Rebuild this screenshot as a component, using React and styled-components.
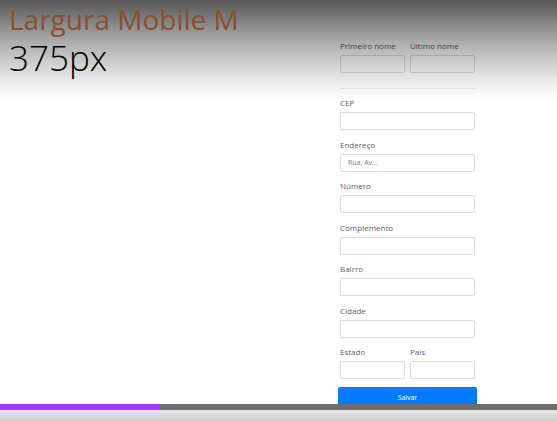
import styled, { createGlobalStyle } from "styled-components";

const GlobalStyle = createGlobalStyle`
  html, body { margin: 0; padding: 0; background: #fff; }
  body { font-family: "Open Sans", "Liberation Sans", sans-serif; }
  * { box-sizing: border-box; }
`;

const firstRow = [
  { label: "Primeiro nome" },
  { label: "Último nome" },
];

const fields = [
  { label: "CEP" },
  { label: "Endereço", placeholder: "Rua, Av..." },
  { label: "Número" },
  { label: "Complemento" },
  { label: "Bairro" },
  { label: "Cidade" },
];

const lastRow = [{ label: "Estado" }, { label: "País" }];

export default function App() {
  return (
    <>
      <GlobalStyle />
      <Stage>
        <Slide>
          <Heading>
            <Title>Largura Mobile M</Title>
            <Size>375px</Size>
          </Heading>

          <Form onSubmit={(e) => e.preventDefault()}>
            <Row>
              {firstRow.map((f) => (
                <Group key={f.label}>
                  <Label>{f.label}</Label>
                  <Input />
                </Group>
              ))}
            </Row>
            <Divider />
            {fields.map((f) => (
              <Group key={f.label}>
                <Label>{f.label}</Label>
                <Input placeholder={f.placeholder} />
              </Group>
            ))}
            <Row>
              {lastRow.map((f) => (
                <Group key={f.label}>
                  <Label>{f.label}</Label>
                  <Input />
                </Group>
              ))}
            </Row>
            <Button type="submit">Salvar</Button>
          </Form>
        </Slide>

        {/* sombra do player por cima */}
        <TopShade />
        <Controls>
          <Progress>
            <Played style={{ width: 160 }} />
          </Progress>
          <BottomShade />
        </Controls>
      </Stage>
    </>
  );
}

/* ------------------- styled-components ------------------- */
const Stage = styled.div`
  position: relative;
  width: 557px;
  height: 421px;
  overflow: hidden;
  background: #fff;
`;

const Slide = styled.div`
  display: grid;
  grid-template-columns: 331px 135px;
  padding-left: 9px;
`;

const Heading = styled.div`
  position: relative;
  z-index: 2;
  padding-top: 5px;
`;

const Title = styled.h1`
  margin: 0;
  font-family: "Open Sans", sans-serif;
  font-weight: 400;
  font-size: 28px;
  line-height: 28px;
  color: #88502e;
  white-space: nowrap;
`;

const Size = styled.div`
  margin-top: 7px;
  font-family: "Open Sans", sans-serif;
  font-weight: 300;
  font-size: 35px;
  line-height: 35px;
  color: #000;
`;

const Form = styled.form`
  padding-top: 40px;
  display: flex;
  flex-direction: column;
`;

const Row = styled.div`
  display: grid;
  grid-template-columns: 65px 65px;
  column-gap: 5px;
`;

const Group = styled.div`
  display: flex;
  flex-direction: column;
  margin-bottom: 8.5px;
`;

const Label = styled.label`
  font-family: "Open Sans", sans-serif;
  font-size: 8px;
  line-height: 12px;
  color: #5e5e5e;
  margin-bottom: 3px;
`;

const Input = styled.input`
  height: 18px;
  width: 100%;
  padding: 0 7px;
  border: 1px solid #d9dde2;
  border-radius: 2px;
  background: #fff;
  font-family: "Open Sans", sans-serif;
  font-size: 7px;
  color: #495057;
  outline: none;

  &::placeholder {
    color: #737b82;
  }
`;

const Divider = styled.hr`
  margin: 6.5px 0 8px;
  border: 0;
  border-top: 1px solid #e8e8e8;
`;

const Button = styled.button`
  margin: -1px -2px 0;
  height: 22px;
  border: 0;
  border-radius: 2px;
  background: #007bff;
  color: #fff;
  font-family: "Open Sans", sans-serif;
  font-size: 7px;
  cursor: pointer;
`;

const TopShade = styled.div`
  position: absolute;
  top: 0;
  left: 0;
  right: 0;
  height: 100px;
  pointer-events: none;
  z-index: 1;
  background: linear-gradient(
    rgba(0, 0, 0, 0.66),
    rgba(0, 0, 0, 0.3) 45px,
    rgba(0, 0, 0, 0.06) 85px,
    rgba(0, 0, 0, 0) 100px
  );
`;

const Controls = styled.div`
  position: absolute;
  left: 0;
  right: 0;
  bottom: 0;
  z-index: 3;
`;

const Progress = styled.div`
  height: 6px;
  background: #6b6e70;
`;

const Played = styled.div`
  height: 100%;
  background: #a23bf0;
`;

const BottomShade = styled.div`
  height: 11px;
  background: linear-gradient(#e6e6e6, #cfd0d0);
`;
